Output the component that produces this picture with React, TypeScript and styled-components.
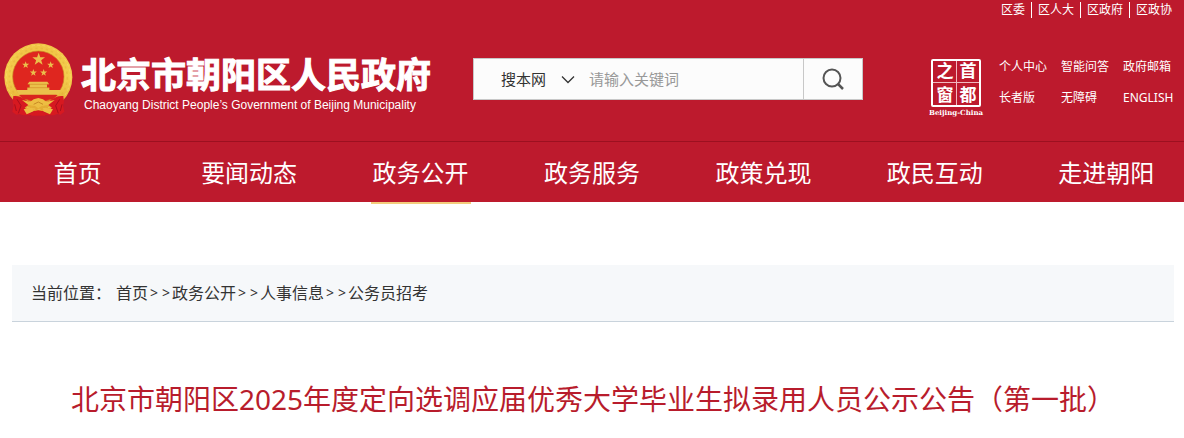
import React from 'react';
import styled, { createGlobalStyle } from 'styled-components';

const GlobalStyle = createGlobalStyle`
  * { box-sizing: border-box; }
  body {
    margin: 0;
    background: #fff;
    color: #333;
    font-family: "Noto Sans", "Noto Sans CJK SC", sans-serif;
    overflow-x: hidden;
  }
  a { color: inherit; text-decoration: none; }
  ul, ol { margin: 0; padding: 0; list-style: none; }
`;

const Header = styled.header`
  background: #bd1a2d;
  color: #fff;
`;

const TopLinks = styled.ul`
  display: flex;
  justify-content: flex-end;
  padding: 2px 6px 0 0;
  font-size: 12px;
  line-height: 16px;
`;

const TopLink = styled.li`
  padding: 0 6px;
  & + & { border-left: 1px solid #fff; }
`;

const Main = styled.div`
  display: flex;
  align-items: flex-start;
  padding: 22px 10px 21px 0;
`;

const Brand = styled.a`
  display: flex;
  flex: 0 0 473px;
  height: 80px;
`;

const BrandText = styled.span`
  display: flex;
  flex-direction: column;
  padding-top: 14px;
  white-space: nowrap;
`;

const BrandName = styled.strong`
  padding-left: 1px;
  font-size: 35px;
  font-weight: 700;
  line-height: 42px;
  -webkit-text-stroke: 1px #fff;
`;

const BrandEnglish = styled.span`
  padding-left: 4px;
  font-family: "Liberation Sans", Arial, sans-serif;
  font-size: 12px;
  line-height: 18px;
`;

const Search = styled.form`
  display: flex;
  flex: 0 1 390px;
  min-width: 0;
  height: 42px;
  margin-top: 18px;
  background: #fcfcfc;
  border: 1px solid #c8c8c8;
`;

const Scope = styled.label`
  position: relative;
  flex: 0 0 102px;
  color: #333;
`;

const ScopeSelect = styled.select`
  width: 100%;
  height: 100%;
  padding: 0 0 0 27px;
  border: 0;
  appearance: none;
  background: transparent;
  color: #333;
  font-family: inherit;
  font-size: 15px;
`;

const ScopeArrow = styled.svg`
  position: absolute;
  right: 1px;
  top: 16px;
  pointer-events: none;
`;

const Keyword = styled.input`
  flex: 1;
  min-width: 0;
  padding: 0 13px;
  border: 0;
  background: transparent;
  font-family: inherit;
  font-size: 15px;
  &::placeholder { color: #999; opacity: 1; }
`;

const SearchButton = styled.button`
  display: flex;
  flex: 0 0 59px;
  align-items: center;
  justify-content: center;
  padding: 0;
  border: 0;
  border-left: 1px solid #c8c8c8;
  background: transparent;
`;

const Side = styled.div`
  display: flex;
  gap: 14px;
  margin: 18px 0 0 auto;
`;

const QuickLinks = styled.ul`
  display: grid;
  grid-template-columns: 48px 48px 51px;
  column-gap: 14px;
  row-gap: 15px;
  height: 47px;
  padding-top: 1px;
  font-size: 12px;
  line-height: 16px;
  white-space: nowrap;
`;

const Nav = styled.nav`
  border-top: 1px solid #9c1020;
`;

const NavList = styled.ul`
  display: flex;
  margin: 0 -8px;
`;

const NavItem = styled.li`
  display: flex;
  flex: 1;
  justify-content: center;
  height: 60px;
`;

const NavLink = styled.a<{ $active?: boolean }>`
  position: relative;
  padding: 0 2px;
  font-size: 24px;
  line-height: 62px;
  &::after {
    content: "";
    display: ${(p) => (p.$active ? 'block' : 'none')};
    position: absolute;
    left: 0;
    right: 0;
    top: 60px;
    height: 2px;
    background: #f3cd7c;
  }
`;

const Content = styled.main`
  padding: 63px 10px 0 12px;
`;

const Breadcrumb = styled.nav`
  display: flex;
  padding: 0 19px;
  background: #f6f8fa;
  border-bottom: 1px solid #c9d3dc;
  font-size: 16px;
  line-height: 56px;
`;

const CrumbLabel = styled.span`
  padding-right: 5px;
`;

const Crumbs = styled.ol`
  display: flex;
`;

const Crumb = styled.li`
  display: flex;
`;

const Separator = styled.span`
  display: grid;
  grid-template-columns: 12px 12px;
  justify-items: center;
  font-size: 14px;
`;

const Title = styled.h1`
  margin: 56px 0 0;
  color: #b81c2c;
  font-size: 28px;
  font-weight: 400;
  line-height: 42px;
  text-align: center;
`;

const star = (cx: number, cy: number, r: number) =>
  Array.from({ length: 10 }, (_, i) => {
    const a = (Math.PI / 5) * i - Math.PI / 2;
    const d = i % 2 ? r * 0.4 : r;
    return `${(cx + d * Math.cos(a)).toFixed(1)},${(cy + d * Math.sin(a)).toFixed(1)}`;
  }).join(' ');

const Emblem = () => (
  <svg width="80" height="80" viewBox="0 0 240 240" aria-hidden="true">
    <defs>
      <linearGradient id="gold" x1="0" y1="0" x2="0" y2="1">
        <stop offset="0" stopColor="#f0c445" />
        <stop offset="0.5" stopColor="#f4cf4e" />
        <stop offset="1" stopColor="#e2a730" />
      </linearGradient>
    </defs>
    <circle cx="115" cy="112" r="102" fill="url(#gold)" />
    <circle cx="115" cy="112" r="87" fill="none" stroke="#dca336" strokeWidth="5" strokeDasharray="7 9" opacity="0.3" />
    <circle cx="115" cy="112" r="96" fill="none" stroke="#fae078" strokeWidth="3" strokeDasharray="9 7" opacity="0.5" />
    <circle cx="115" cy="110" r="77" fill="#df261f" stroke="#c98a25" strokeWidth="2" />
    <g fill="#eac04b">
      <polygon points={star(116, 58, 20)} />
      <polygon points={star(77, 75, 11)} />
      <polygon points={star(152, 75, 11)} />
      <polygon points={star(100, 98, 11)} />
      <polygon points={star(131, 98, 11)} />
      <path d="M88 125h54l5 7h-6v11h7v7h36l-8 14H57l-9-14h34v-7h7v-11h-6z" />
    </g>
    <path d="M83 133h64M82 143h66" stroke="#d38d29" strokeWidth="2" />
    <path d="M57 165h116l-16 15-15-4-27 14-29-14-14 4z" fill="#d9231e" />
    <path d="M40 168q21-2 32 10l22 10-20 15 22 22-26 1-12-4-9 2-12-9 4-18-3-12z" fill="#d71920" />
    <path d="M190 168q-21-2-32 10l-22 10 20 15-22 22 26 1 12-4 9 2 12-9-4-18 3-12z" fill="#d71920" />
    <path d="M51 178l12 19-8 23M179 178l-12 19 8 23M44 193l5 20M186 193l-5 20" fill="none" stroke="#a90f1c" strokeWidth="3" />
    <path d="M66 180l25 5 10-7 14-4 14 4 10 7 25-5-19 15-20 3-10 7-10-7-20-3z" fill="#edbd42" />
    <path d="M71 208l24-5 8 10-23 10zM159 208l-24-5-8 10 23 10z" fill="#edbd42" />
    <path d="M88 222q27-22 54 0l-8 5H96z" fill="#d71920" />
    <path d="M101 193l14-7 14 7" fill="none" stroke="#c98a25" strokeWidth="3" />
  </svg>
);

const SealArt = styled.svg`
  display: block;
  font-family: "Noto Sans CJK SC", sans-serif;
  font-weight: 700;
  fill: #fff;
`;

const Seal = () => (
  <SealArt width="56" height="59" viewBox="0 0 56 59" role="img" aria-label="首都之窗">
    <rect x="3" y="2" width="48" height="46" rx="1" fill="none" stroke="#fff" strokeWidth="2" />
    <path d="M4 24.500h46M27.500 3v44" stroke="#f1b9bf" strokeWidth="1" />
    <g fontSize="17" textAnchor="middle">
      <text x="16" y="19">之</text>
      <text x="39" y="19">首</text>
      <text x="16" y="43">窗</text>
      <text x="39" y="43">都</text>
    </g>
    <text x="27" y="57" fontSize="7" textAnchor="middle" fontFamily="DejaVu Serif, serif">Beijing-China</text>
  </SealArt>
);

const topLinks = ['区委', '区人大', '区政府', '区政协'];
const quickLinks = ['个人中心', '智能问答', '政府邮箱', '长者版', '无障碍', 'ENGLISH'];
const navLinks = ['首页', '要闻动态', '政务公开', '政务服务', '政策兑现', '政民互动', '走进朝阳'];
const crumbs = ['首页', '政务公开', '人事信息', '公务员招考'];

export default function App() {
  return (
    <>
      <GlobalStyle />
      <Header>
        <TopLinks>
          {topLinks.map((t) => (
            <TopLink key={t}><a href="#">{t}</a></TopLink>
          ))}
        </TopLinks>
        <Main>
          <Brand href="#">
            <Emblem />
            <BrandText>
              <BrandName>北京市朝阳区人民政府</BrandName>
              <BrandEnglish>Chaoyang District People’s Government of Beijing Municipality</BrandEnglish>
            </BrandText>
          </Brand>
          <Search role="search" onSubmit={(e) => e.preventDefault()}>
            <Scope>
              <ScopeSelect aria-label="搜索范围">
                <option>搜本网</option>
              </ScopeSelect>
              <ScopeArrow width="14" height="9" viewBox="0 0 14 9">
                <path d="M1 1.500l6 6 6-6" fill="none" stroke="#333" strokeWidth="1.3" />
              </ScopeArrow>
            </Scope>
            <Keyword type="text" aria-label="关键词" placeholder="请输入关键词" />
            <SearchButton type="submit" aria-label="搜索">
              <svg width="22" height="22" viewBox="0 0 22 22" fill="none" stroke="#555" strokeWidth="2">
                <circle cx="10" cy="10" r="8.500" />
                <path d="M16 16l5 5" strokeWidth="2.500" />
              </svg>
            </SearchButton>
          </Search>
          <Side>
            <a href="#"><Seal /></a>
            <QuickLinks>
              {quickLinks.map((t) => (
                <li key={t}><a href="#">{t}</a></li>
              ))}
            </QuickLinks>
          </Side>
        </Main>
        <Nav>
          <NavList>
            {navLinks.map((t) => (
              <NavItem key={t}>
                <NavLink href="#" $active={t === '政务公开'}>{t}</NavLink>
              </NavItem>
            ))}
          </NavList>
        </Nav>
      </Header>
      <Content>
        <Breadcrumb aria-label="当前位置">
          <CrumbLabel>当前位置：</CrumbLabel>
          <Crumbs>
            {crumbs.map((t, i) => (
              <Crumb key={t}>
                {i > 0 && <Separator><span>&gt;</span><span>&gt;</span></Separator>}
                <a href="#">{t}</a>
              </Crumb>
            ))}
          </Crumbs>
        </Breadcrumb>
        <Title>北京市朝阳区2025年度定向选调应届优秀大学毕业生拟录用人员公示公告（第一批）</Title>
      </Content>
    </>
  );
}
